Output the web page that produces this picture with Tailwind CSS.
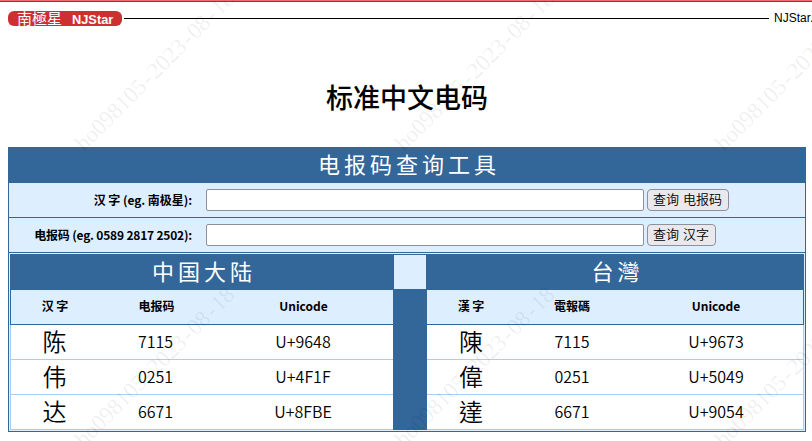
<!DOCTYPE html>
<html lang="zh-CN">
<head>
<meta charset="utf-8">
<title>标准中文电码</title>
<script src="https://cdn.jsdelivr.net/npm/@tailwindcss/browser@4"></script>
</head>
<body class="relative h-[441px] w-[812px] overflow-hidden bg-white font-['Noto_Sans_CJK_SC',sans-serif] text-black">
<div class="h-px bg-[#ee6b78]"></div>
<div class="h-px bg-[#b52335]"></div>
<header class="flex h-[33px] items-start pt-[9px] pl-2">
  <div class="flex h-[15px] w-[114px] shrink-0 items-center rounded-[6px] bg-[#cc3031] pl-[9px] whitespace-nowrap text-white">
    <span class="w-[55px] pb-[3px] text-[15px] leading-[15px] font-normal">南極星</span>
    <span class="pt-px font-['Liberation_Sans',sans-serif] text-[12.8px] leading-[15px] font-bold">NJStar</span>
  </div>
  <div class="mt-[7px] ml-[2px] h-px w-[645px] shrink-0 bg-black"></div>
  <span class="ml-[5px] font-['Liberation_Sans',sans-serif] text-[12px] leading-[15px]">NJStar.</span>
</header>
<h1 class="flex h-[112px] items-center justify-center pl-[2px] pb-[2px] pt-[12px] text-[27px] leading-none font-medium">标准中文电码</h1>
<main class="ml-2 w-[798px] border border-[#336699] bg-[#ddeeff]">
  <h2 class="flex h-[35px] items-center justify-center bg-[#336699] pb-[5px] pl-[4px] text-[22px] leading-none tracking-[4px] font-normal text-white">电报码查询工具</h2>
  <div class="flex h-[35px] items-center border-b border-[#336699]">
    <label class="w-[183px] pb-px text-right text-[12px] font-bold tracking-[-0.05px] whitespace-nowrap">汉 字 (eg. 南极星):</label>
    <input class="ml-[14px] h-[22px] w-[438px] rounded-[2px] border border-[#8f8f9d] bg-white">
    <button class="ml-[3px] h-[22px] w-[82px] rounded-[4px] border border-[#8f8f9d] bg-[#e9e9ed] pr-px pb-[3px] text-[13px] leading-none font-[350] whitespace-nowrap"><span class="[word-spacing:1px]">查询 电报码</span></button>
  </div>
  <div class="flex h-[35px] items-center border-b border-[#336699]">
    <label class="w-[183px] pb-px text-right text-[12px] font-bold tracking-[-0.2px] whitespace-nowrap">电报码 (eg. 0589 2817 2502):</label>
    <input class="ml-[14px] h-[22px] w-[438px] rounded-[2px] border border-[#8f8f9d] bg-white">
    <button class="ml-[3px] h-[22px] w-[69px] rounded-[4px] border border-[#8f8f9d] bg-[#e9e9ed] pr-px pb-[3px] text-[13px] leading-none font-[350] whitespace-nowrap"><span class="[word-spacing:1px]">查询 汉字</span></button>
  </div>
  <div class="p-px">
    <div class="flex h-[36px] bg-[#336699] text-[22px] leading-none tracking-[4px] text-white">
      <h3 class="flex w-[384px] items-center justify-center pb-[4px] pl-[4px]">中国大陆</h3>
      <div class="mt-px h-[34px] w-8 bg-[#ddeeff]"></div>
      <h3 class="flex w-[378px] items-center justify-center pb-[4px] pl-[5px]" lang="zh-TW">台灣</h3>
    </div>
    <div class="flex h-[140px]">
      <section class="w-[383px] text-center">
        <div class="grid h-[35px] grid-cols-[88px_115px_179px] items-center border-b border-l border-[#336699] pb-[2px] text-[12px] font-bold"><span>汉 字</span><span>电报码</span><span>Unicode</span></div>
        <div class="grid h-[35px] grid-cols-[87px_115px_180px] items-center border-b border-l border-[#aaccee] bg-white pb-[2px] text-[16px] font-[350]"><span class="text-[24px] leading-none">陈</span><span>7115</span><span>U+9648</span></div>
        <div class="grid h-[35px] grid-cols-[87px_115px_180px] items-center border-b border-l border-[#aaccee] bg-white pb-[2px] text-[16px] font-[350]"><span class="text-[24px] leading-none">伟</span><span>0251</span><span>U+4F1F</span></div>
        <div class="grid h-[35px] grid-cols-[87px_115px_180px] items-center border-b border-l border-[#aaccee] bg-white pb-[2px] text-[16px] font-[350]"><span class="text-[24px] leading-none">达</span><span>6671</span><span>U+8FBE</span></div>
      </section>
      <div class="h-[140px] w-[34px] bg-[#336699]"></div>
      <section class="w-[377px] text-center font-['Noto_Sans_CJK_TC',sans-serif]" lang="zh-TW">
        <div class="grid h-[35px] grid-cols-[88px_114px_174px] items-center border-r border-b border-[#336699] pb-[2px] text-[12px] font-bold"><span>漢 字</span><span>電報碼</span><span>Unicode</span></div>
        <div class="grid h-[35px] grid-cols-[88px_114px_174px] items-center border-r border-b border-[#aaccee] bg-white pb-[2px] text-[16px] font-[350]"><span class="text-[24px] leading-none">陳</span><span>7115</span><span>U+9673</span></div>
        <div class="grid h-[35px] grid-cols-[88px_114px_174px] items-center border-r border-b border-[#aaccee] bg-white pb-[2px] text-[16px] font-[350]"><span class="text-[24px] leading-none">偉</span><span>0251</span><span>U+5049</span></div>
        <div class="grid h-[35px] grid-cols-[88px_114px_174px] items-center border-r border-b border-[#aaccee] bg-white pb-[2px] text-[16px] font-[350]"><span class="text-[24px] leading-none">達</span><span>6671</span><span>U+9054</span></div>
      </section>
    </div>
  </div>
</main>
<!-- Diagonal watermark overlay, repeated every 320 x 296 px -->
<svg id="marks" class="pointer-events-none absolute inset-0 font-['Liberation_Serif',serif]" width="812" height="441" fill="#000" fill-opacity="0.07" font-size="23"></svg>
<script>
const svg = document.getElementById('marks');
const label = 'ho098105-2023-08-18';
for (const y of [152, 448]) for (const x of [84, 404, 724]) {
  const t = document.createElementNS('http://www.w3.org/2000/svg', 'text');
  t.setAttribute('transform', `translate(${x} ${y}) rotate(-45)`);
  t.setAttribute('x', [...label].map((c, i) => i * 11.3 + (c === '-' ? 2 : 0)).join(' '));
  t.textContent = label;
  svg.appendChild(t);
}
</script>
</body>
</html>
